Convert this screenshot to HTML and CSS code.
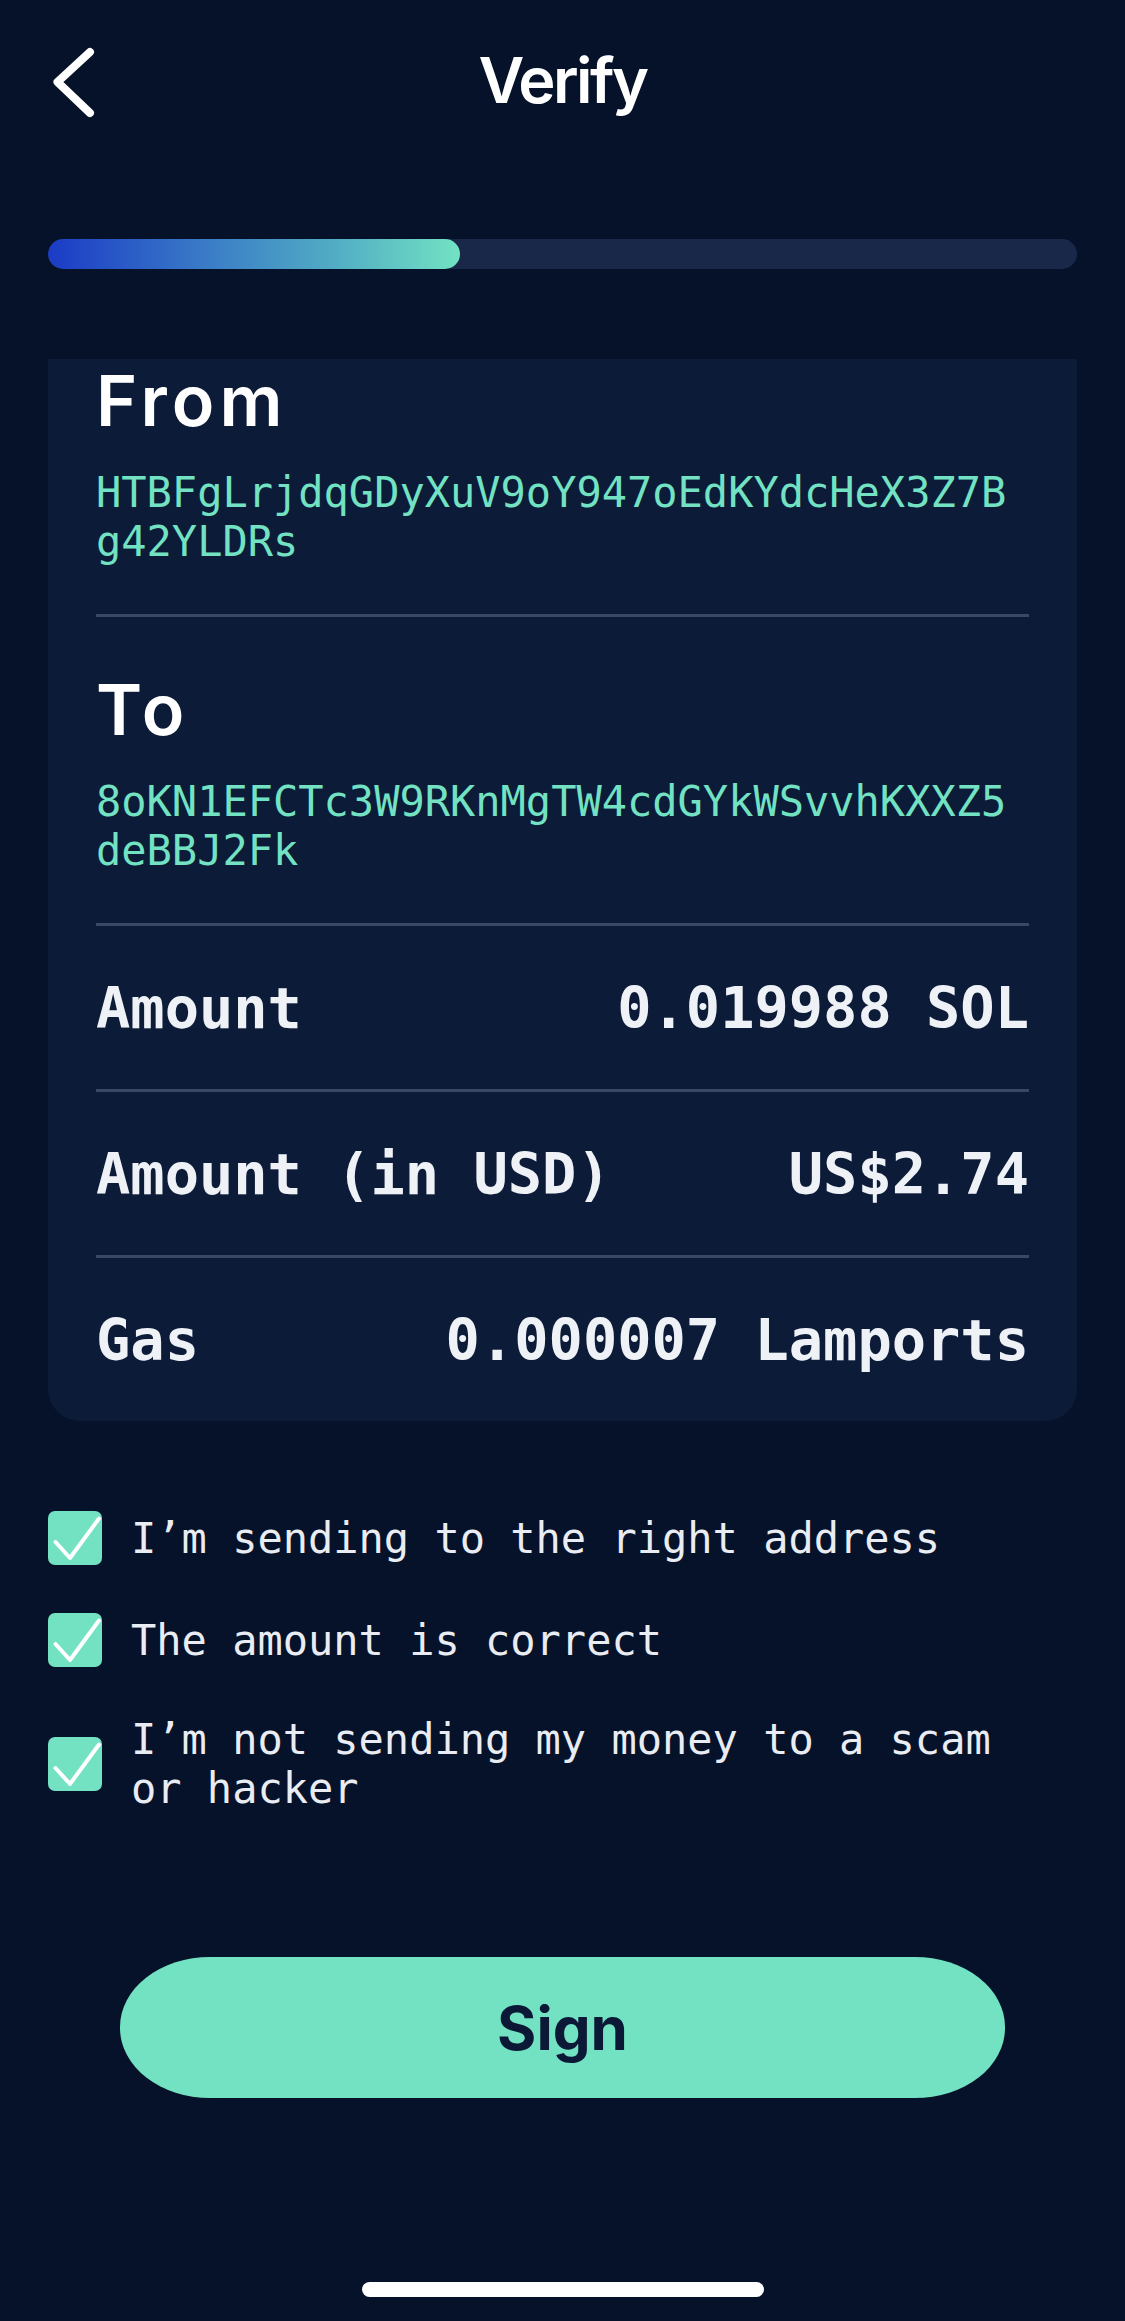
FILE: index.html
```html
<!DOCTYPE html>
<html lang="en">
<head>
<meta charset="utf-8">
<title>Verify</title>
<link rel="stylesheet" href="styles.css">
</head>
<body>
<div class="screen">
  <header class="topbar">
    <button class="back" aria-label="Back">
      <svg width="60" height="80" viewBox="0 0 60 80" fill="none">
        <path d="M42 12 L9.5 42 L42 73" stroke="#ffffff" stroke-width="8" stroke-linecap="round" stroke-linejoin="round"/>
      </svg>
    </button>
    <h1 class="title">Verify</h1>
    <span class="spacer"></span>
  </header>

  <div class="progress"><div class="progress-fill" style="width:40%"></div></div>

  <section class="card">
    <div class="party">
      <h2 class="party-label">From</h2>
      <p class="address">HTBFgLrjdqGDyXuV9oY947oEdKYdcHeX3Z7Bg42YLDRs</p>
    </div>
    <div class="party">
      <h2 class="party-label">To</h2>
      <p class="address">8oKN1EFCTc3W9RKnMgTW4cdGYkWSvvhKXXZ5deBBJ2Fk</p>
    </div>
    <div class="row"><span>Amount</span><span>0.019988 SOL</span></div>
    <div class="row"><span>Amount (in USD)</span><span>US$2.74</span></div>
    <div class="row"><span>Gas</span><span>0.000007 Lamports</span></div>
  </section>

  <ul class="checklist">
    <li class="check-item">
      <span class="checkbox"><svg width="54" height="54" viewBox="0 0 54 54" fill="none"><path d="M7.5 31 L22 47 L51 7.5" stroke="#ffffff" stroke-width="4" stroke-linecap="round" stroke-linejoin="round"/></svg></span>
      <span class="check-label">I’m sending to the right address</span>
    </li>
    <li class="check-item">
      <span class="checkbox"><svg width="54" height="54" viewBox="0 0 54 54" fill="none"><path d="M7.5 31 L22 47 L51 7.5" stroke="#ffffff" stroke-width="4" stroke-linecap="round" stroke-linejoin="round"/></svg></span>
      <span class="check-label">The amount is correct</span>
    </li>
    <li class="check-item">
      <span class="checkbox"><svg width="54" height="54" viewBox="0 0 54 54" fill="none"><path d="M7.5 31 L22 47 L51 7.5" stroke="#ffffff" stroke-width="4" stroke-linecap="round" stroke-linejoin="round"/></svg></span>
      <span class="check-label">I’m not sending my money to a scam or hacker</span>
    </li>
  </ul>

  <button class="sign">Sign</button>

  <div class="home-indicator"></div>
</div>
</body>
</html>
```
FILE: styles.css
```css
* { box-sizing: border-box; }

html, body {
  margin: 0;
  padding: 0;
  background: #061229;
}

.screen {
  width: 1125px;
  min-height: 2321px;
  padding: 0 48px;
  background: #061229;
  font-family: Inter, "Noto Sans", sans-serif;
}

.topbar {
  height: 160px;
  display: grid;
  grid-template-columns: 1fr auto 1fr;
  align-items: center;
}

.back {
  justify-self: start;
  padding: 0;
  margin: 0;
  border: none;
  background: none;
  display: block;
}
.back svg { display: block; }

.title {
  margin: 0;
  color: #ffffff;
  font-family: Inter, sans-serif;
  font-weight: 600;
  font-size: 63px;
  line-height: 1;
  letter-spacing: -2.5px;
}

.progress {
  margin-top: 79px;
  height: 30px;
  border-radius: 15px;
  background: #192848;
  overflow: hidden;
}
.progress-fill {
  height: 100%;
  border-radius: 15px;
  background: linear-gradient(90deg, #1b3bc6 0%, #3b7ec6 40%, #52adc4 70%, #72e2c3 100%);
}

.card {
  margin-top: 90px;
  padding: 0 48px;
  background: #0c1b38;
  border-radius: 0 0 32px 32px;
}

.party {
  padding: 58px 0 48px;
}
.party:first-child {
  padding-top: 7px;
}
.party + .party,
.row {
  border-top: 3px solid #3a4866;
}

.party-label {
  margin: 0;
  color: #ffffff;
  font-family: Inter, sans-serif;
  font-weight: 600;
  font-size: 70px;
  line-height: 70px;
  letter-spacing: 5px;
}

.address {
  margin: 32px 0 0;
  color: #72e2c3;
  font-family: "DejaVu Sans Mono", monospace;
  font-size: 42px;
  line-height: 49px;
  word-break: break-all;
}

.row {
  height: 166px;
  display: flex;
  align-items: center;
  justify-content: space-between;
  color: #eef1f6;
  font-family: "DejaVu Sans Mono", monospace;
  font-weight: 700;
  font-size: 57px;
  white-space: pre;
}

.checklist {
  list-style: none;
  margin: 90px 0 0;
  padding: 0;
  display: flex;
  flex-direction: column;
  gap: 48px;
}

.check-item {
  display: flex;
  align-items: center;
  gap: 29px;
}

.checkbox {
  flex: none;
  width: 54px;
  height: 54px;
  border-radius: 7px;
  background: #72e2c3;
}
.checkbox svg { display: block; }

.check-label {
  max-width: 900px;
  color: #e9ecf2;
  font-family: "DejaVu Sans Mono", monospace;
  font-size: 42px;
  line-height: 49px;
}

.sign {
  display: block;
  width: 885px;
  height: 141px;
  margin: 144px auto 0;
  border: none;
  border-radius: 90px / 70px;
  background: #72e2c3;
  color: #0b1936;
  font-family: Inter, sans-serif;
  font-weight: 700;
  font-size: 60px;
}

.home-indicator {
  width: 402px;
  height: 15px;
  margin: 184px auto 0;
  border-radius: 8px;
  background: #ffffff;
}
```
